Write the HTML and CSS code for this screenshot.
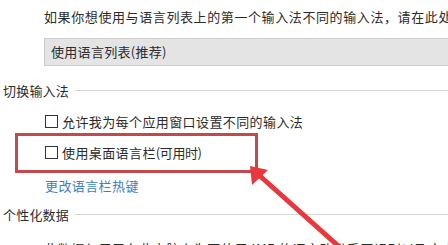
FILE: index.html
```
<!DOCTYPE html>
<html>
<head>
	<meta charset="utf-8">
	<title>输入法设置</title>
	<link rel="stylesheet" href="styles.css">
</head>
<body>
	<div class="page">
		<p class="desc">如果你想使用与语言列表上的第一个输入法不同的输入法，请在此处选择它。</p>
		<div class="select">使用语言列表(推荐)</div>

		<div class="section">
			<span>切换输入法</span>
			<div class="rule"></div>
		</div>
		<label class="check"><span class="box"></span>允许我为每个应用窗口设置不同的输入法</label>
		<div class="mark">
			<label class="check"><span class="box"></span>使用桌面语言栏<span class="paren">(可用时)</span></label>
		</div>
		<a class="link" href="#">更改语言栏热键</a>

		<div class="section">
			<span>个性化数据</span>
			<div class="rule"></div>
		</div>
		<p class="desc">此数据仅用于在此电脑上为不使用 IME 的语言改进手写识别以及文本预测结果。</p>
	</div>

	<svg class="arrow" width="448" height="245" viewBox="0 0 448 245">
		<line x1="345" y1="252" x2="260" y2="176" stroke="#e8383d" stroke-width="5" stroke-linecap="round"/>
		<polygon points="250,166 252,185 268,170" fill="#e8383d"/>
	</svg>
</body>
</html>
```
FILE: styles.css
```
*{
	box-sizing: border-box;
}
body{
	margin: 0;
	background: #fff;
	color: #2b2b2b;
	font-family: "Noto Sans CJK SC", "Noto Sans", sans-serif;
	font-size: 13px;
	overflow: hidden;
	height: 245px;
	position: relative;
}
.page{
	width: 600px;
	padding-top: 8px;
}
.desc{
	margin: 0 0 0 44px;
	white-space: nowrap;
	line-height: 18px;
	letter-spacing: 0.6px;
}
.select{
	margin: 12px 0 0 44px;
	height: 28px;
	line-height: 26px;
	padding-left: 6px;
	background: #e4e4e4;
	border: 1px solid #cdcdcd;
	letter-spacing: 0.3px;
}
.section{
	display: flex;
	align-items: center;
	margin: 14px 0 0 3px;
	height: 20px;
}
.section span{
	white-space: nowrap;
	letter-spacing: 0.2px;
}
.rule{
	flex: 1;
	height: 1px;
	background: #d6d6d6;
	margin-left: 6px;
}
.check{
	display: flex;
	align-items: center;
	margin: 12px 0 0 45px;
	height: 18px;
	white-space: nowrap;
	letter-spacing: 0.4px;
}
.box{
	width: 13px;
	height: 13px;
	border: 1px solid #333;
	background: #fff;
	margin-right: 4px;
}
.paren{
	letter-spacing: -0.4px;
}
.mark{
	width: 243px;
	height: 40px;
	margin: 3px 0 0 15px;
	border: 3px solid #c24a4d;
	padding-top: 7px;
}
.mark .check{
	margin: 0 0 0 27px;
}
.link{
	display: block;
	margin: 4px 0 0 45px;
	color: #3b7fc4;
	text-decoration: none;
	line-height: 18px;
	letter-spacing: 0.4px;
}
.page .link + .section{
	margin-top: 9px;
}
.page .section + .desc{
	margin-top: 16px;
}
.arrow{
	position: absolute;
	left: 0;
	top: 0;
}
```
